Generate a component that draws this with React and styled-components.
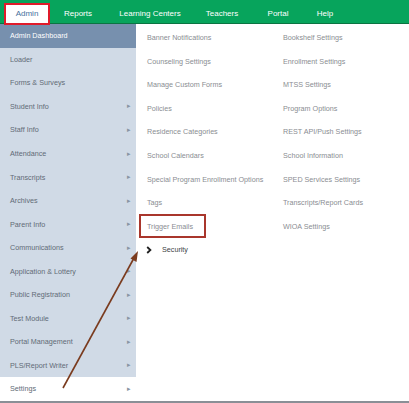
import styled, { createGlobalStyle } from "styled-components";

const GlobalStyle = createGlobalStyle`
  html, body {
    margin: 0;
    padding: 0;
    background: #ffffff;
  }
  body {
    font-family: "Liberation Sans", Arial, sans-serif;
  }
`;

// widths picked so each label sits centred where it is in the screenshot
const navItems = [
  { label: "Admin", w: 46 },
  { label: "Reports", w: 56 },
  { label: "Learning Centers", w: 88 },
  { label: "Teachers", w: 56 },
  { label: "Portal", w: 56 },
  { label: "Help", w: 38 },
];

const sideItems = [
  { label: "Admin Dashboard", active: true },
  { label: "Loader" },
  { label: "Forms & Surveys" },
  { label: "Student Info", arrow: true },
  { label: "Staff Info", arrow: true },
  { label: "Attendance", arrow: true },
  { label: "Transcripts", arrow: true },
  { label: "Archives", arrow: true },
  { label: "Parent Info", arrow: true },
  { label: "Communications", arrow: true },
  { label: "Application & Lottery", arrow: true },
  { label: "Public Registration", arrow: true },
  { label: "Test Module", arrow: true },
  { label: "Portal Management", arrow: true },
  { label: "PLS/Report Writer", arrow: true },
  { label: "Settings", arrow: true, selected: true },
];

const colOne = [
  "Banner Notifications",
  "Counseling Settings",
  "Manage Custom Forms",
  "Policies",
  "Residence Categories",
  "School Calendars",
  "Special Program Enrollment Options",
  "Tags",
];

const colTwo = [
  "Bookshelf Settings",
  "Enrollment Settings",
  "MTSS Settings",
  "Program Options",
  "REST API/Push Settings",
  "School Information",
  "SPED Services Settings",
  "Transcripts/Report Cards",
  "WIOA Settings",
];

export default function App() {
  return (
    <Page>
      <GlobalStyle />
      <NavBar>
        {navItems.map((n, i) => (
          <NavItem key={n.label} $active={i === 0} $w={n.w}>
            {n.label}
          </NavItem>
        ))}
      </NavBar>
      <Body>
        <Sidebar>
          {sideItems.map((s) => (
            <SideRow key={s.label} $active={s.active} $selected={s.selected}>
              <span>{s.label}</span>
              {s.arrow && <Caret>&#9656;</Caret>}
            </SideRow>
          ))}
        </Sidebar>
        <Panel>
          <Column>
            {colOne.map((c) => (
              <MenuLink key={c}>{c}</MenuLink>
            ))}
            <MenuLink $boxed>Trigger Emails</MenuLink>
            <SubHeader>
              <Chevron viewBox="0 0 6 8" width="6" height="8">
                <polyline points="1.2,1 4.4,4 1.2,7" fill="none" stroke="#1f1f1f" strokeWidth="1.8" />
              </Chevron>
              Security
            </SubHeader>
          </Column>
          <Column>
            {colTwo.map((c) => (
              <MenuLink key={c}>{c}</MenuLink>
            ))}
          </Column>
        </Panel>
      </Body>
      <Pointer viewBox="0 0 409 403" width="409" height="403">
        <line x1="63" y1="388" x2="134" y2="258" stroke="#7a3b1e" strokeWidth="1.6" />
        <polygon points="138,251 136.5,262 130.5,258.5" fill="#7a3b1e" />
      </Pointer>
    </Page>
  );
}

const Page = styled.div`
  position: relative;
  width: 409px;
  height: 403px;
  overflow: hidden;
  background: #ffffff;
`;

const NavBar = styled.div`
  display: flex;
  align-items: flex-start;
  height: 23px;
  background: #07a45c;
  border-bottom: 1px solid #0b7442;
  padding-left: 4px;
`;

const NavItem = styled.div`
  position: relative;
  z-index: 1;
  width: ${(p) => p.$w}px;
  height: 22px;
  flex-shrink: 0;
  white-space: nowrap;
  display: flex;
  align-items: center;
  justify-content: center;
  font-size: 8px;
  color: ${(p) => (p.$active ? "#46709c" : "#ffffff")};
  background: ${(p) => (p.$active ? "#ffffff" : "transparent")};
  border: 2px solid ${(p) => (p.$active ? "#e01b2a" : "transparent")};
  margin-top: 3px;
  padding-bottom: 1px;
  box-sizing: border-box;
`;

const Body = styled.div`
  display: flex;
  height: 377px;
  border-bottom: 2px solid #8a8f96;
`;

const Sidebar = styled.div`
  width: 136px;
  flex-shrink: 0;
  background: #d0dae6;
  display: flex;
  flex-direction: column;
`;

const SideRow = styled.div`
  height: 23.56px;
  display: flex;
  align-items: center;
  justify-content: space-between;
  padding: 0 5px 0 10px;
  font-size: 7.2px;
  color: ${(p) => (p.$active ? "#ffffff" : "#626b76")};
  background: ${(p) => (p.$active ? "#7790ae" : p.$selected ? "#ffffff" : "transparent")};
`;

const Caret = styled.span`
  font-size: 6.5px;
  color: #8994a3;
`;

const Panel = styled.div`
  flex: 1;
  display: grid;
  grid-template-columns: 136px 1fr;
  padding: 2px 0 0 11px;
  background: #ffffff;
`;

const Column = styled.div`
  display: flex;
  flex-direction: column;
  align-items: flex-start;
`;

const MenuLink = styled.div`
  height: 23.56px;
  box-sizing: border-box;
  display: flex;
  align-items: center;
  font-size: 7.2px;
  color: #8a8d92;
  white-space: nowrap;
  ${(p) =>
    p.$boxed &&
    `
    border: 2px solid #a9362c;
    margin-left: -8px;
    padding: 0 11px 0 6px;
  `}
`;

const SubHeader = styled.div`
  height: 23.56px;
  display: flex;
  align-items: center;
  font-size: 7.2px;
  color: #3c3f44;
`;

const Chevron = styled.svg`
  margin-right: 10px;
  margin-left: -1px;
`;

const Pointer = styled.svg`
  position: absolute;
  left: 0;
  top: 0;
  pointer-events: none;
`;
